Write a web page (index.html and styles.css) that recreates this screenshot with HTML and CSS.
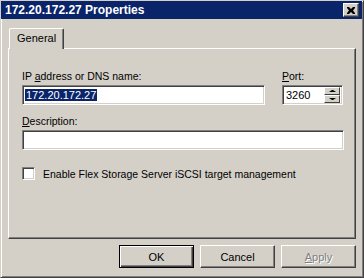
FILE: index.html
```html
<!DOCTYPE html>
<html lang="en">
<head>
    <meta charset="UTF-8">
    <title>172.20.172.27 Properties</title>
    <link rel="stylesheet" href="styles.css">
</head>
<body>
    <div class="window">
        <div class="titlebar">
            <span class="title-text">172.20.172.27 Properties</span>
            <button class="close-btn">
                <svg width="8" height="7" viewBox="0 0 8 7">
                    <path d="M0 0h2l2 2 2-2h2v1l-2 2.5 2 2.5v1h-2l-2-2-2 2h-2v-1l2-2.5-2-2.5z" fill="#000"/>
                </svg>
            </button>
        </div>
        <div class="content">
            <div class="tabs">
                <div class="tab">General</div>
            </div>
            <div class="panel">
                <div class="row">
                    <div class="field">
                        <label class="label">IP <u>a</u>ddress or DNS name:</label>
                        <div class="textbox"><span class="selected">172.20.172.27</span></div>
                    </div>
                    <div class="field">
                        <label class="label"><u>P</u>ort:</label>
                        <div class="textbox spin">
                            <span>3260</span>
                            <div class="spin-btns">
                                <div class="spin-btn"><span class="arrow-up"></span></div>
                                <div class="spin-btn"><span class="arrow-down"></span></div>
                            </div>
                        </div>
                    </div>
                </div>
                <div class="field desc">
                    <label class="label"><u>D</u>escription:</label>
                    <div class="textbox"></div>
                </div>
                <div class="check-row">
                    <span class="checkbox"></span>
                    <span>Enable Flex Storage Server iSCSI target management</span>
                </div>
            </div>
            <div class="buttons">
                <button class="btn default">OK</button>
                <button class="btn">Cancel</button>
                <button class="btn disabled"><u>A</u>pply</button>
            </div>
        </div>
    </div>
</body>
</html>
```

FILE: styles.css
```css
body {
    margin: 0;
    padding: 0;
    font-family: "Liberation Sans", Arial, sans-serif;
    font-size: 10.5px;
    color: #000;
}

.window {
    width: 364px;
    height: 278px;
    box-sizing: border-box;
    background-color: #d4d0c8;
    border: 1px solid;
    border-color: #d4d0c8 #404040 #404040 #d4d0c8;
    box-shadow: inset 1px 1px #fff, inset -1px -1px #808080;
}

.titlebar {
    height: 18px;
    margin-right: 1px;
    background-color: #0a246a;
    display: flex;
    align-items: center;
    justify-content: space-between;
    padding: 0 3px 0 4px;
}

.title-text {
    color: #fff;
    font-weight: bold;
    font-size: 12px;
}

.close-btn {
    width: 16px;
    height: 14px;
    padding: 0;
    background-color: #d4d0c8;
    border: 1px solid;
    border-color: #fff #404040 #404040 #fff;
    box-shadow: inset -1px -1px #808080;
    display: flex;
    align-items: center;
    justify-content: center;
}

.content {
    padding: 9px 7px 0 7px;
}

.tabs {
    display: flex;
    padding-left: 1px;
}

.tab {
    height: 20px;
    line-height: 19px;
    padding: 0 7px;
    border: 1px solid;
    border-bottom: none;
    border-color: #fff #404040 #fff #fff;
    box-shadow: inset -1px 0 #808080;
    border-radius: 2px 2px 0 0;
    margin-bottom: -1px;
    position: relative;
    background-color: #d4d0c8;
    z-index: 1;
    font-size: 11px;
}

.panel {
    width: 348px;
    height: 191px;
    box-sizing: border-box;
    border: 1px solid;
    border-color: #fff #404040 #404040 #fff;
    box-shadow: inset -1px -1px #808080;
    padding: 21px 0 0 13px;
}

.row {
    display: flex;
    gap: 17px;
}

.field {
    display: flex;
    flex-direction: column;
}

.label {
    line-height: 13px;
    margin-bottom: 2px;
}

.textbox {
    width: 243px;
    height: 20px;
    box-sizing: border-box;
    background-color: #fff;
    border: 1px solid;
    border-color: #808080 #fff #fff #808080;
    box-shadow: inset 1px 1px #404040, inset -1px -1px #d4d0c8;
    padding: 2px 0 0 2px;
    line-height: 14px;
    font-size: 11px;
}

.selected {
    background-color: #0a246a;
    color: #fff;
    padding: 0 1px;
}

.spin {
    width: 61px;
    display: flex;
    justify-content: space-between;
    padding-right: 2px;
}

.spin span {
    padding-left: 1px;
}

.spin-btns {
    display: flex;
    flex-direction: column;
    margin-top: -1px;
}

.spin-btn {
    width: 16px;
    height: 8px;
    box-sizing: border-box;
    background-color: #d4d0c8;
    border: 1px solid;
    border-color: #fff #404040 #404040 #fff;
    display: flex;
    align-items: center;
    justify-content: center;
}

.arrow-up {
    border-left: 3px solid transparent;
    border-right: 3px solid transparent;
    border-bottom: 2px solid #000;
}

.arrow-down {
    border-left: 3px solid transparent;
    border-right: 3px solid transparent;
    border-top: 2px solid #000;
}

.desc {
    margin-top: 10px;
}

.desc .textbox {
    width: 322px;
}

.check-row {
    display: flex;
    align-items: center;
    gap: 8px;
    margin-top: 17px;
}

.checkbox {
    width: 13px;
    height: 13px;
    box-sizing: border-box;
    background-color: #fff;
    border: 1px solid;
    border-color: #808080 #fff #fff #808080;
    box-shadow: inset 1px 1px #404040, inset -1px -1px #d4d0c8;
}

.buttons {
    display: flex;
    justify-content: flex-end;
    gap: 6px;
    margin-top: 6px;
}

.btn {
    width: 75px;
    height: 23px;
    padding: 0;
    font-family: "Liberation Sans", Arial, sans-serif;
    font-size: 11px;
    color: #000;
    background-color: #d4d0c8;
    border: 1px solid;
    border-color: #fff #404040 #404040 #fff;
    box-shadow: inset -1px -1px #808080;
}

.btn.default {
    border-color: #000;
    box-shadow: inset 1px 1px #fff, inset -1px -1px #404040, inset -2px -2px #808080;
}

.btn.disabled {
    color: #808080;
    text-shadow: 1px 1px #fff;
}
```
